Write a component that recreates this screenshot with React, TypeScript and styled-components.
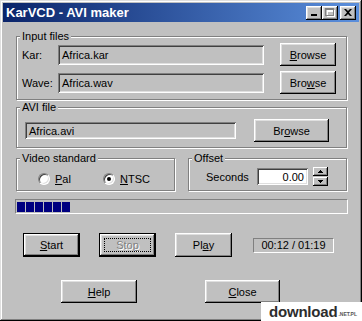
import styled, { createGlobalStyle } from 'styled-components';

const Global = createGlobalStyle`
    html, body {
        margin: 0;
        padding: 0;
        background: #c0c0c0;
    }
`;

// window frame ----------------
const Win = styled.div`
    position: relative;
    width: 362px;
    height: 321px;
    box-sizing: border-box;
    padding: 3px;
    background: #c0c0c0;
    box-shadow: inset -1px -1px 0 #000, inset 1px 1px 0 #dfdfdf, inset -2px -2px 0 #808080, inset 2px 2px 0 #fff;
    display: flex;
    flex-direction: column;
    font-family: 'Liberation Sans', Arial, sans-serif;
    font-size: 11px;
    color: #000;
    overflow: hidden;
`;
const TitleBar = styled.div`
    height: 19px;
    flex: none;
    display: flex;
    align-items: center;
    padding: 0 3px 0 3px;
    background: linear-gradient(to right, #0a246a, #5b8fdc);
`;
const TitleText = styled.span`
    color: #fff;
    font-weight: bold;
    font-size: 13px;
`;
const TitleBtns = styled.div`
    margin-left: auto;
    display: flex;
`;
const CapBtn = styled.div<{ $gap?: boolean }>`
    width: 16px;
    height: 14px;
    margin-left: ${(p) => (p.$gap ? '2px' : '0')};
    background: #c0c0c0;
    box-shadow: inset -1px -1px 0 #000, inset 1px 1px 0 #fff, inset -2px -2px 0 #808080, inset 2px 2px 0 #dfdfdf;
    display: flex;
    align-items: center;
    justify-content: center;
`;
const Body = styled.div`
    flex: 1;
    display: flex;
    flex-direction: column;
    padding: 0 12px 0 13px;
`;

// group boxes ----------------
const Group = styled.div<{ $mt?: number; $w?: number }>`
    margin-top: ${(p) => p.$mt ?? 0}px;
    width: ${(p) => (p.$w ? `${p.$w}px` : 'auto')};
    box-sizing: border-box;
    border: 1px solid #808080;
    box-shadow: inset 1px 1px 0 #fff, 1px 1px 0 #fff;
    display: flex;
    flex-direction: column;
`;
const Legend = styled.div`
    align-self: flex-start;
    margin: -7px 0 0 3px;
    padding: 0 2px;
    line-height: 13px;
    background: #c0c0c0;
`;
const Row = styled.div<{ $mt?: number; $pl?: number; $h?: number; $pb?: number }>`
    display: flex;
    align-items: center;
    height: ${(p) => p.$h ?? 23}px;
    margin-top: ${(p) => p.$mt ?? 0}px;
    margin-bottom: ${(p) => p.$pb ?? 0}px;
    padding-left: ${(p) => p.$pl ?? 0}px;
`;
const Pair = styled.div`
    display: flex;
    align-items: stretch;
    gap: 13px;
    height: 33px;
    margin-top: 10px;
`;
const Label = styled.span<{ $w: number }>`
    width: ${(p) => p.$w}px;
    flex: none;
`;
const Field = styled.div<{ $w: number; $h: number; $white?: boolean; $right?: boolean }>`
    width: ${(p) => p.$w}px;
    height: ${(p) => p.$h}px;
    box-sizing: border-box;
    flex: none;
    padding: 0 4px;
    display: flex;
    align-items: center;
    justify-content: ${(p) => (p.$right ? 'flex-end' : 'flex-start')};
    background: ${(p) => (p.$white ? '#fff' : '#c0c0c0')};
    box-shadow: inset 1px 1px 0 #808080, inset -1px -1px 0 #fff, inset 2px 2px 0 #404040, inset -2px -2px 0 #dfdfdf;
`;
const Btn = styled.button<{ $w: number; $h?: number; $ml?: number; $frame?: boolean; $off?: boolean }>`
    position: relative;
    width: ${(p) => p.$w}px;
    height: ${(p) => p.$h ?? 23}px;
    margin-left: ${(p) => p.$ml ?? 0}px;
    flex: none;
    padding: 0;
    border: ${(p) => (p.$frame ? '1px solid #000' : 'none')};
    box-sizing: border-box;
    background: #c0c0c0;
    font-family: 'Liberation Sans', Arial, sans-serif;
    font-size: 11px;
    color: ${(p) => (p.$off ? '#808080' : '#000')};
    text-shadow: ${(p) => (p.$off ? '1px 1px 0 #fff' : 'none')};
    box-shadow: inset -1px -1px 0 #000, inset 1px 1px 0 #fff, inset -2px -2px 0 #808080, inset 2px 2px 0 #dfdfdf;
`;
const Focus = styled.span`
    position: absolute;
    inset: 4px;
    border: 1px dotted #000;
`;

// radios, spinner ----------------
const Radio = styled.label<{ $w?: number }>`
    display: flex;
    align-items: center;
    gap: 5px;
    width: ${(p) => (p.$w ? `${p.$w}px` : 'auto')};
`;
const Circle = styled.span<{ $on?: boolean }>`
    width: 12px;
    height: 12px;
    box-sizing: border-box;
    border-radius: 50%;
    background: #fff;
    border: 1px solid;
    border-color: #808080 #fff #fff #808080;
    box-shadow: inset 1px 1px 0 #404040, inset -1px -1px 0 #dfdfdf;
    display: flex;
    align-items: center;
    justify-content: center;
    &::after {
        content: '';
        width: 4px;
        height: 4px;
        border-radius: 50%;
        background: ${(p) => (p.$on ? '#000' : 'transparent')};
    }
`;
const Spin = styled.div`
    margin-left: 5px;
    display: flex;
    flex-direction: column;
    gap: 1px;
`;
const SpinBtn = styled.div`
    width: 15px;
    height: 9px;
    background: #c0c0c0;
    box-shadow: inset -1px -1px 0 #000, inset 1px 1px 0 #fff, inset -2px -2px 0 #808080;
    display: flex;
    align-items: center;
    justify-content: center;
`;

// progress and status ----------------
const Progress = styled.div`
    margin: 8px 0 0 -1px;
    width: 333px;
    height: 15px;
    box-sizing: border-box;
    border: 1px solid;
    border-color: #808080 #fff #fff #808080;
    padding: 2px 1px 1px;
    display: flex;
    gap: 1px;
`;
const Block = styled.span`
    width: 8px;
    height: 10px;
    background: #000080;
`;
const TimeBox = styled.div`
    margin-left: 21px;
    width: 81px;
    height: 15px;
    box-sizing: border-box;
    border: 1px solid;
    border-color: #808080 #fff #fff #808080;
    display: flex;
    align-items: center;
    justify-content: center;
`;

// watermark ----------------
const Mark = styled.div`
    position: absolute;
    right: 0;
    bottom: 0;
    width: 101px;
    height: 19px;
    background: #fff;
    display: flex;
    align-items: center;
    padding-left: 8px;
    box-sizing: border-box;
`;
const MarkText = styled.span`
    font-weight: bold;
    font-size: 15px;
    color: #2d2d2d;
    letter-spacing: -0.2px;
`;
const MarkSmall = styled.span`
    margin: 5px 0 0 1px;
    font-size: 5px;
    font-weight: bold;
    color: #555;
`;

const Up = () => (
    <svg width="5" height="3" viewBox="0 0 5 3">
        <path d="M2 0h1v1h1v1h1v1H0V2h1V1h1z" fill="#000" />
    </svg>
);
const Down = () => (
    <svg width="5" height="3" viewBox="0 0 5 3">
        <path d="M0 0h5v1H4v1H3v1H2V2H1V1H0z" fill="#000" />
    </svg>
);

export default function App() {
    return (
        <>
            <Global />
            <Win>
                <TitleBar>
                    <TitleText>KarVCD - AVI maker</TitleText>
                    <TitleBtns>
                        <CapBtn>
                            <svg width="8" height="9" viewBox="0 0 8 9">
                                <rect x="1" y="6" width="6" height="2" fill="#000" />
                            </svg>
                        </CapBtn>
                        <CapBtn>
                            <svg width="10" height="9" viewBox="0 0 10 9">
                                <path d="M1 1h8v7H1z M2 3v4h6V3z" fill="#fff" transform="translate(1 1)" />
                                <path d="M0 0h9v8H0z M1 2v5h7V2z" fill="#808080" fillRule="evenodd" />
                            </svg>
                        </CapBtn>
                        <CapBtn $gap>
                            <svg width="8" height="7" viewBox="0 0 8 7">
                                <path d="M0 0h2l2 2 2-2h2L5 3.5 8 7H6L4 5 2 7H0l3-3.5z" fill="#000" />
                            </svg>
                        </CapBtn>
                    </TitleBtns>
                </TitleBar>
                <Body>
                    <Group $mt={14}>
                        <Legend>Input files</Legend>
                        <Row $pl={5}>
                            <Label $w={36}>Kar:</Label>
                            <Field $w={206} $h={20}>Africa.kar</Field>
                            <Btn $w={56} $ml={16}>
                                <u>B</u>rowse
                            </Btn>
                        </Row>
                        <Row $pl={5} $mt={5} $pb={5}>
                            <Label $w={36}>Wave:</Label>
                            <Field $w={206} $h={20}>Africa.wav</Field>
                            <Btn $w={56} $ml={16}>
                                Bro<u>w</u>se
                            </Btn>
                        </Row>
                    </Group>
                    <Group $mt={7}>
                        <Legend>AVI file</Legend>
                        <Row $pl={8} $mt={5} $pb={5}>
                            <Field $w={211} $h={17}>Africa.avi</Field>
                            <Btn $w={75} $ml={18}>
                                Br<u>o</u>wse
                            </Btn>
                        </Row>
                    </Group>
                    <Pair>
                        <Group $w={159}>
                            <Legend>Video standard</Legend>
                            <Row $pl={21} $mt={7} $h={13}>
                                <Radio $w={65}>
                                    <Circle />
                                    <span>
                                        <u>P</u>al
                                    </span>
                                </Radio>
                                <Radio>
                                    <Circle $on />
                                    <span>
                                        <u>N</u>TSC
                                    </span>
                                </Radio>
                            </Row>
                        </Group>
                        <Group $w={159}>
                            <Legend>Offset</Legend>
                            <Row $pl={17} $mt={2} $h={19}>
                                <Label $w={51}>Seconds</Label>
                                <Field $w={51} $h={17} $white $right>
                                    0.00
                                </Field>
                                <Spin>
                                    <SpinBtn>
                                        <Up />
                                    </SpinBtn>
                                    <SpinBtn>
                                        <Down />
                                    </SpinBtn>
                                </Spin>
                            </Row>
                        </Group>
                    </Pair>
                    <Progress>
                        {[0, 1, 2, 3, 4, 5].map((i) => (
                            <Block key={i} />
                        ))}
                    </Progress>
                    <Row $mt={19} $pl={7} $h={24}>
                        <Btn $w={57} $h={24} $frame>
                            <u>S</u>tart
                        </Btn>
                        <Btn $w={57} $h={24} $ml={19} $frame $off>
                            <Focus />
                            Sto<u>p</u>
                        </Btn>
                        <Btn $w={57} $h={24} $ml={19}>
                            Pl<u>a</u>y
                        </Btn>
                        <TimeBox>00:12 / 01:19</TimeBox>
                    </Row>
                    <Row $mt={23} $pl={45}>
                        <Btn $w={76}>
                            <u>H</u>elp
                        </Btn>
                        <Btn $w={75} $ml={68}>
                            <u>C</u>lose
                        </Btn>
                    </Row>
                </Body>
                <Mark>
                    <MarkText>download</MarkText>
                    <MarkSmall>.NET.PL</MarkSmall>
                </Mark>
            </Win>
        </>
    );
}
